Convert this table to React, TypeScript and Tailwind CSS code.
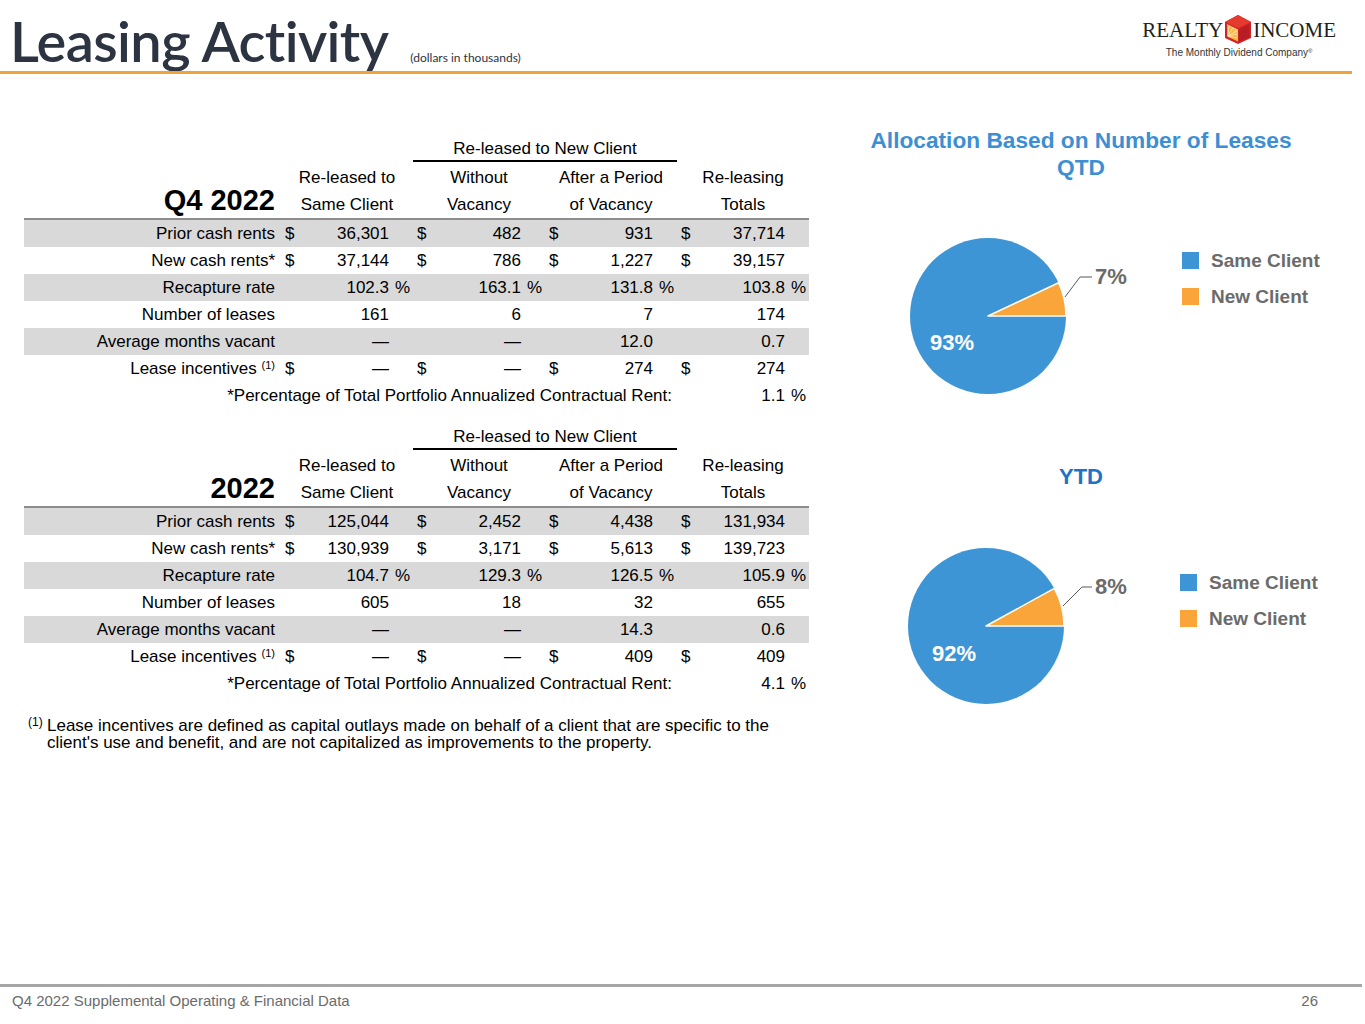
import React from "react";

type Cell = [string, string, string];
type Row = { label: React.ReactNode; cells: Cell[]; grey: boolean };

const Sup = () => <sup className="text-[11px]">(1)</sup>;

const q4Rows: Row[] = [
  { label: "Prior cash rents", grey: true, cells: [["$", "36,301", ""], ["$", "482", ""], ["$", "931", ""], ["$", "37,714", ""]] },
  { label: "New cash rents*", grey: false, cells: [["$", "37,144", ""], ["$", "786", ""], ["$", "1,227", ""], ["$", "39,157", ""]] },
  { label: "Recapture rate", grey: true, cells: [["", "102.3", "%"], ["", "163.1", "%"], ["", "131.8", "%"], ["", "103.8", "%"]] },
  { label: "Number of leases", grey: false, cells: [["", "161", ""], ["", "6", ""], ["", "7", ""], ["", "174", ""]] },
  { label: "Average months vacant", grey: true, cells: [["", "—", ""], ["", "—", ""], ["", "12.0", ""], ["", "0.7", ""]] },
  { label: <>Lease incentives <Sup /></>, grey: false, cells: [["$", "—", ""], ["$", "—", ""], ["$", "274", ""], ["$", "274", ""]] },
];

const yRows: Row[] = [
  { label: "Prior cash rents", grey: true, cells: [["$", "125,044", ""], ["$", "2,452", ""], ["$", "4,438", ""], ["$", "131,934", ""]] },
  { label: "New cash rents*", grey: false, cells: [["$", "130,939", ""], ["$", "3,171", ""], ["$", "5,613", ""], ["$", "139,723", ""]] },
  { label: "Recapture rate", grey: true, cells: [["", "104.7", "%"], ["", "129.3", "%"], ["", "126.5", "%"], ["", "105.9", "%"]] },
  { label: "Number of leases", grey: false, cells: [["", "605", ""], ["", "18", ""], ["", "32", ""], ["", "655", ""]] },
  { label: "Average months vacant", grey: true, cells: [["", "—", ""], ["", "—", ""], ["", "14.3", ""], ["", "0.6", ""]] },
  { label: <>Lease incentives <Sup /></>, grey: false, cells: [["$", "—", ""], ["$", "—", ""], ["$", "409", ""], ["$", "409", ""]] },
];

function DataCell({ c }: { c: Cell }) {
  return (
    <div className="flex h-[27px] items-center leading-[27px]">
      <span className="w-[22px] pl-[4px]">{c[0]}</span>
      <span className="flex-1 text-right">{c[1]}</span>
      <span className="w-[24px] pl-[6px]">{c[2]}</span>
    </div>
  );
}

function TableBlock({ title, rows, pct }: { title: string; rows: Row[]; pct: string }) {
  return (
    <div className="w-[785px] text-[17px] text-black">
      <div className="grid grid-cols-[257px_repeat(4,132px)]">
        <div className="h-[28px]" />
        <div />
        <div className="col-span-2 h-[28px] border-b-2 border-black pt-[1px] text-center leading-[27px]">Re-leased to New Client</div>
        <div />
        <div className="flex h-[56px] items-end justify-end pb-[3px] pr-[6px]">
          <span className="text-[29px] font-bold leading-none">{title}</span>
        </div>
        <div className="h-[56px] pt-[2px] text-center leading-[27px]">Re-leased to<br />Same Client</div>
        <div className="h-[56px] pt-[2px] text-center leading-[27px]">Without<br />Vacancy</div>
        <div className="h-[56px] pt-[2px] text-center leading-[27px]">After a Period<br />of Vacancy</div>
        <div className="h-[56px] pt-[2px] text-center leading-[27px]">Re-leasing<br />Totals</div>
      </div>
      <div className="h-[2px] bg-[#8c8c8c]" />
      {rows.map((r, i) => (
        <div key={i} className={`grid h-[27px] grid-cols-[257px_repeat(4,132px)] ${r.grey ? "bg-[#d9d9d9]" : ""}`}>
          <div className="pr-[6px] text-right leading-[27px]">{r.label}</div>
          {r.cells.map((c, j) => (
            <DataCell key={j} c={c} />
          ))}
        </div>
      ))}
      <div className="grid h-[27px] grid-cols-[257px_repeat(4,132px)]">
        <div className="col-span-4 whitespace-nowrap pr-[5px] text-right leading-[27px]">*Percentage of Total Portfolio Annualized Contractual Rent:</div>
        <DataCell c={["", pct, "%"]} />
      </div>
    </div>
  );
}

function Pie({
  cx,
  pct,
  big,
  small,
  bigX,
  bigY,
  line,
}: {
  cx: number;
  pct: number;
  big: string;
  small: string;
  bigX: number;
  bigY: number;
  line: string;
}) {
  const r = 78;
  const cy = 90;
  const a = (pct / 100) * 2 * Math.PI;
  const ex = cx + r * Math.cos(a);
  const ey = cy - r * Math.sin(a);
  return (
    <svg width="300" height="180" viewBox="0 0 300 180" className="shrink-0">
      <circle cx={cx} cy={cy} r={r} fill="#3e95d5" />
      <path
        d={`M${cx} ${cy} L${cx + r} ${cy} A${r} ${r} 0 0 0 ${ex} ${ey} Z`}
        fill="#f9a53a"
        stroke="#ffffff"
        strokeWidth="1.5"
        strokeLinejoin="round"
      />
      <polyline points={line} fill="none" stroke="#595959" strokeWidth="1" />
      <text x="235" y="58" fill="#6b6b6b" fontSize="22" fontWeight="700" fontFamily="'Liberation Sans', Arial, sans-serif">
        {small}
      </text>
      <text x={bigX} y={bigY} fill="#ffffff" fontSize="22" fontWeight="700" fontFamily="'Liberation Sans', Arial, sans-serif">
        {big}
      </text>
    </svg>
  );
}

function Legend() {
  return (
    <div className="flex flex-col gap-[19px] whitespace-nowrap">
      <div className="flex items-center gap-[12px]">
        <span className="h-[17px] w-[17px] shrink-0 bg-[#3e95d5]" />
        <span className="text-[19px] font-bold leading-[17px] text-[#6b6b6b]">Same Client</span>
      </div>
      <div className="flex items-center gap-[12px]">
        <span className="h-[17px] w-[17px] shrink-0 bg-[#f9a53a]" />
        <span className="text-[19px] font-bold leading-[17px] text-[#6b6b6b]">New Client</span>
      </div>
    </div>
  );
}

function LogoIcon() {
  return (
    <svg width="28" height="29" viewBox="0 0 28 29">
      <defs>
        <linearGradient id="sun" x1="0" y1="1" x2="1" y2="0">
          <stop offset="0" stopColor="#f7941d" />
          <stop offset="1" stopColor="#fcd36a" />
        </linearGradient>
      </defs>
      <polygon points="14,0 27,7 27,23 14,29 1,23 1,7" fill="#d2232a" />
      <polygon points="14,0 27,7 14,13 1,7" fill="#e53a2e" />
      <polygon points="3,9 14,14.5 14,26.5 3,21.5" fill="url(#sun)" />
      <g stroke="#fff3c4" strokeWidth="0.8" opacity="0.9">
        <line x1="4" y1="21" x2="13" y2="15.5" />
        <line x1="4" y1="21" x2="13" y2="19" />
        <line x1="4" y1="21" x2="9" y2="12.5" />
        <line x1="4" y1="21" x2="5" y2="10.5" />
        <line x1="4" y1="21" x2="13" y2="23" />
      </g>
      <polygon points="15,14.5 25.5,9 25.5,22 15,27" fill="#b81d24" />
    </svg>
  );
}

export default function App() {
  return (
    <div className="relative flex h-[1024px] w-[1365px] flex-col overflow-hidden bg-white font-['Liberation_Sans',Arial,sans-serif]">
      {/* Header */}
      <div className="flex h-[71px] items-baseline">
        <div className="ml-[10px] pt-[12px] font-['Lato',sans-serif] text-[56px] font-semibold leading-[57px] tracking-[-0.6px] text-[#2c3341]">
          Leasing Activity
        </div>
        <div className="ml-[22px] font-['Lato',sans-serif] text-[12px] text-[#2c3341]">(dollars in thousands)</div>
        <div className="ml-auto mr-[29px] flex flex-col items-center self-start pt-[15px]">
          <div className="flex items-center">
            <span className="font-['Liberation_Serif',serif] text-[21px] leading-[28px] text-[#231f20]">REALTY</span>
            <span className="mx-[1px]">
              <LogoIcon />
            </span>
            <span className="font-['Liberation_Serif',serif] text-[21px] leading-[28px] text-[#231f20]">INCOME</span>
          </div>
          <div className="mt-[3px] text-[10px] leading-[12px] text-[#333333]">
            The Monthly Dividend Company<sup className="text-[6px]">®</sup>
          </div>
        </div>
      </div>
      <div className="h-[3px] w-[1352px] bg-[#f0a33a]" />

      {/* Main */}
      <div className="flex">
        <div className="flex flex-col pl-[24px] pt-[60px]">
          <TableBlock title="Q4 2022" rows={q4Rows} pct="1.1" />
          <div className="h-[13px]" />
          <TableBlock title="2022" rows={yRows} pct="4.1" />
          <div className="mt-[20px] flex pl-[4px] text-[17px] leading-[17px] text-black">
            <span className="w-[19px] text-[12px] leading-[11px]">(1)</span>
            <div className="flex flex-col whitespace-nowrap">
              <span>Lease incentives are defined as capital outlays made on behalf of a client that are specific to the</span>
              <span>client's use and benefit, and are not capitalized as improvements to the property.</span>
            </div>
          </div>
        </div>

        <div className="ml-[51px] flex w-[442px] shrink-0 flex-col pt-[53px]">
          <div className="whitespace-nowrap text-center text-[22.7px] font-bold leading-[27px] text-[#3d8fd3]">
            Allocation Based on Number of Leases
            <br />
            QTD
          </div>
          <div className="mt-[45px] flex">
            <Pie cx={128} pct={7} big="93%" small="7%" bigX={70} bigY={124} line="205,71 220,51 232,51" />
            <div className="ml-[22px] pt-[26px]">
              <Legend />
            </div>
          </div>
          <div className="mt-[57px] text-center text-[22px] font-bold leading-[27px] text-[#1f72c6]">YTD</div>
          <div className="mt-[46px] flex">
            <Pie cx={126} pct={8} big="92%" small="8%" bigX={72} bigY={125} line="203,70 222,51 232,51" />
            <div className="ml-[20px] pt-[38px]">
              <Legend />
            </div>
          </div>
        </div>
      </div>

      {/* Footer */}
      <div className="mt-auto">
        <div className="h-[3px] w-[1362px] bg-[#a6a6a6]" />
        <div className="flex h-[37px] items-start justify-between pl-[12px] pr-[47px] pt-[5px] text-[15px] leading-[17px] text-[#6b6b6b]">
          <span>Q4 2022 Supplemental Operating &amp; Financial Data</span>
          <span>26</span>
        </div>
      </div>
    </div>
  );
}
